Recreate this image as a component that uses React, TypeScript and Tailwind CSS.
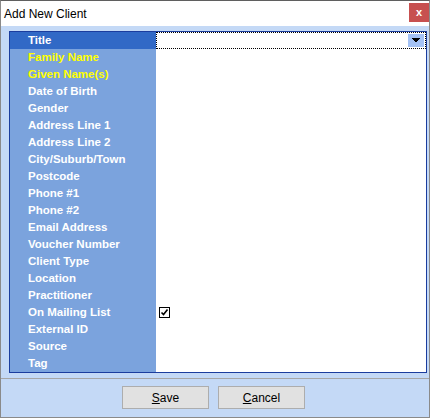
import React from 'react';

const fields = [
  'Title',
  'Family Name',
  'Given Name(s)',
  'Date of Birth',
  'Gender',
  'Address Line 1',
  'Address Line 2',
  'City/Suburb/Town',
  'Postcode',
  'Phone #1',
  'Phone #2',
  'Email Address',
  'Voucher Number',
  'Client Type',
  'Location',
  'Practitioner',
  'On Mailing List',
  'External ID',
  'Source',
  'Tag',
];

const required = ['Family Name', 'Given Name(s)'];

function Row({ label, index }: { label: string; index: number }) {
  const selected = index === 0;
  return (
    <div className="flex h-[17px]">
      <div
        className={`w-[146px] shrink-0 pl-[18px] flex items-center text-[11.5px] font-bold leading-none ${
          selected ? 'bg-[#3169c6]' : 'bg-[#7ba3dd]'
        } ${required.includes(label) ? 'text-[#ffff00]' : 'text-white'}`}
      >
        {label}
      </div>
      <div
        className={`flex-1 bg-white flex items-center ${
          selected ? 'border border-dotted border-black justify-end pr-[1px]' : 'pl-[3px]'
        }`}
      >
        {selected && (
          <div className="w-[16px] h-[13px] bg-[#a4c2f5] flex items-center justify-center">
            <svg width="8" height="5" viewBox="0 0 8 5">
              <path d="M0 0h8v1h-1v1h-1v1h-1v1h-2v-1h-1v-1h-1v-1h-1z" fill="#000" />
            </svg>
          </div>
        )}
        {label === 'On Mailing List' && (
          <div className="w-[11px] h-[11px] border border-black bg-white flex items-center justify-center">
            <svg width="9" height="9" viewBox="0 0 9 9">
              <path d="M1.5 4.5 L3.5 6.5 L7.5 1.5" stroke="#000" strokeWidth="1.6" fill="none" />
            </svg>
          </div>
        )}
      </div>
    </div>
  );
}

export default function App() {
  return (
    <div
      className="w-[430px] h-[418px] flex flex-col bg-[#c4d9f6] border border-[#8a8a8a] border-t-[#5f5f5f]"
      style={{ fontFamily: '"Liberation Sans", Arial, sans-serif' }}
    >
      <div className="h-[25px] bg-white flex items-center justify-between pl-[3px]">
        <span className="text-[12px] text-black">Add New Client</span>
        <div className="w-[20px] h-[19px] mb-[3px] bg-[#c75050] flex items-center justify-center text-white text-[11px] font-bold leading-none">
          x
        </div>
      </div>
      <div className="pl-[8px] pr-[2px] pt-[5px]">
        <div className="border border-[#1b3d9e] flex flex-col">
          {fields.map((f, i) => (
            <Row key={f} label={f} index={i} />
          ))}
        </div>
      </div>
      <div className="mt-[5px] border-t border-[#a6a6a6] flex-1 flex items-start pt-[7px] pl-[121px] gap-[9px]">
        <button className="w-[87px] h-[23px] bg-[#e1e1e1] border border-[#adadad] text-[12px] text-black">
          <span className="underline">S</span>ave
        </button>
        <button className="w-[87px] h-[23px] bg-[#e1e1e1] border border-[#adadad] text-[12px] text-black">
          <span className="underline">C</span>ancel
        </button>
      </div>
    </div>
  );
}
